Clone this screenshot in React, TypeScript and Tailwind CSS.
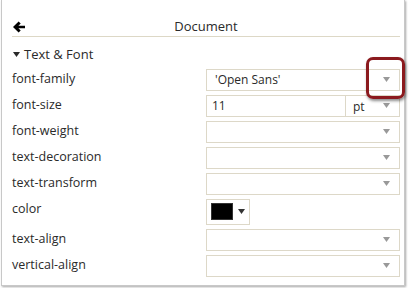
const rows = [
  { label: "font-family", kind: "select", value: "'Open Sans'" },
  { label: "font-size", kind: "size", value: "11" },
  { label: "font-weight", kind: "select", value: "" },
  { label: "text-decoration", kind: "select", value: "" },
  { label: "text-transform", kind: "select", value: "" },
  { label: "color", kind: "color", value: "" },
  { label: "text-align", kind: "select", value: "" },
  { label: "vertical-align", kind: "select", value: "" },
];

function Caret({ className = "" }: { className?: string }) {
  return (
    <svg width="7" height="5" viewBox="0 0 7 5" className={className}>
      <path d="M0 0h7L3.5 5z" fill="currentColor" />
    </svg>
  );
}

function BackArrow() {
  return (
    <svg width="12" height="12" viewBox="0 0 12 12" className="ml-[1px] text-black">
      <path d="M0 6L5.6 0.6L7.7 2.6L5.4 4.7H12V7.3H5.4L7.7 9.4L5.6 11.4Z" fill="currentColor" />
    </svg>
  );
}

function Field({ kind, value }: { kind: string; value: string }) {
  if (kind === "color") {
    return (
      <div className="flex h-[26px] w-[44px] items-center border border-[#ddd8c8] pl-[4px]">
        <div className="h-[17px] w-[22px] border border-[#333] bg-black" />
        <Caret className="ml-[5px] text-[#333]" />
      </div>
    );
  }
  if (kind === "size") {
    return (
      <div className="flex h-[22px] w-[194px] border border-[#ddd8c8]">
        <div className="flex w-[139px] items-center border-r border-[#ddd8c8] pl-[5px]">{value}</div>
        <div className="flex flex-1 items-center justify-between pl-[7px] pr-[9px]">
          <span className="mt-[2px]">pt</span>
          <Caret className="text-[#999]" />
        </div>
      </div>
    );
  }
  return (
    <div className="flex h-[22px] w-[194px] items-center justify-between border border-[#ddd8c8] pl-[8px] pr-[9px]">
      <span>{value}</span>
      <Caret className="text-[#999]" />
    </div>
  );
}

export default function App() {
  return (
    <div className="h-[288px] w-[410px] bg-white" style={{ fontFamily: "'Open Sans', sans-serif" }}>
      <div className="relative ml-[1px] h-[286px] w-[404px] border-x border-b border-[#c8c8c8] bg-white pl-[10px] pr-[4px] pt-[17px] text-[12px] text-[#2a2a2a] shadow-[1px_1px_2px_rgba(0,0,0,0.35)]">
        <div className="relative flex h-[20px] items-center border-b border-[#ddd8c6]">
          <BackArrow />
          <div className="absolute inset-x-0 top-0 text-center text-[13px]">Document</div>
        </div>
        <div className="mt-[8px] flex items-center">
          <Caret className="ml-[1px]" />
          <span className="ml-[4px] text-[13px]">Text &amp; Font</span>
        </div>
        <div className="mt-[4px] flex flex-col gap-[4px]">
          {rows.map((r) => (
            <div key={r.label} className="flex items-start">
              <div className="w-[194px] pt-[1px] text-[12.5px]">{r.label}</div>
              <Field kind={r.kind} value={r.value} />
            </div>
          ))}
        </div>
        <div className="absolute left-[364px] top-[57px] h-[42px] w-[39px] rounded-[7px] border-[3px] border-[#8b1a1e] shadow-[1px_2px_3px_rgba(0,0,0,0.45)]" />
      </div>
    </div>
  );
}
